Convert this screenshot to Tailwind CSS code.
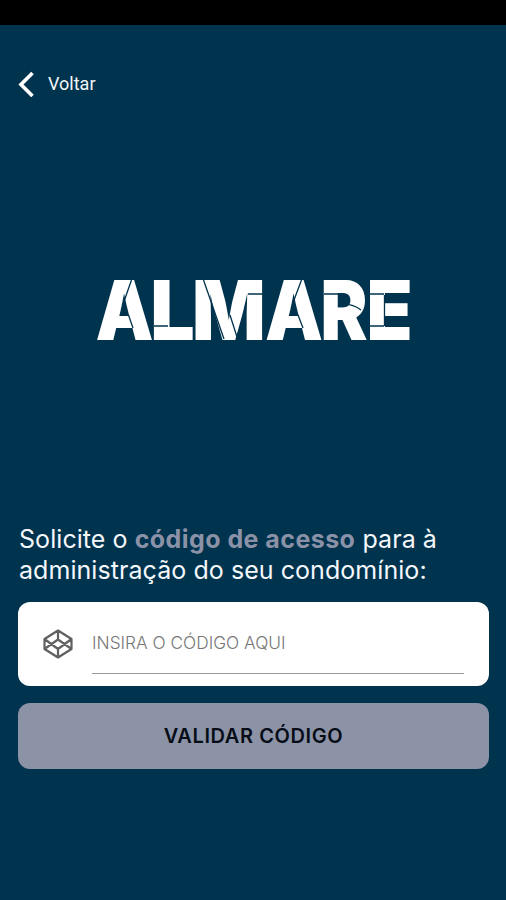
<!DOCTYPE html>
<html lang="pt-BR">
<head>
    <meta charset="UTF-8">
    <meta name="viewport" content="width=device-width, initial-scale=1.0">
    <title>Almare - Código de acesso</title>
    <script src="https://cdn.jsdelivr.net/npm/@tailwindcss/browser@4"></script>
</head>
<body class="bg-[#00334e] h-screen overflow-hidden flex flex-col font-['Inter',sans-serif]">
    <!-- Status bar -->
    <div class="h-[25px] shrink-0 bg-black"></div>

    <header class="px-[18px] pt-[45px]">
        <a href="#" class="flex items-center h-[27px] text-[#f3f6f8] font-['Roboto',sans-serif] text-[18px]">
            <svg class="w-[17px] h-[26px]" viewBox="0 0 17 26" fill="none" stroke="#fff" stroke-width="3.6">
                <path d="M14.5 2 3 13.5 14.5 25"/>
            </svg>
            <span class="ml-[13px]">Voltar</span>
        </a>
    </header>

    <main class="flex flex-col px-[18px]">
        <!-- Stencil wordmark -->
        <svg class="mt-[153px] w-[320px] h-[120px] self-center" viewBox="93 250 320 120" role="img" aria-label="ALMARE">
            <g fill="#fff" font-family="Inter" font-weight="900" font-size="82">
                <text transform="translate(95.5 339.5) scale(.89 1)">A</text>
                <text transform="translate(150.3 339.5) scale(.96 1)">L</text>
                <text transform="translate(192 339.5) scale(.94 1)">M</text>
                <text transform="translate(265 339.5) scale(.89 1)">A</text>
                <text transform="translate(320.6 339.5) scale(.86 1)">R</text>
                <text transform="translate(366.6 339.5) scale(.92 1)">E</text>
            </g>
            <g fill="none" stroke="#00334e" stroke-width="1.3">
                <path d="M131.5 280 124.5 300M128.5 315 133 328M154 326H168"/>
                <path d="M203.5 280 224 339M230 315 237 337M248 294H264"/>
                <path d="M301.5 280 294 300M298 315 303 328"/>
                <path d="M324 294H338M338 304Q352 303 361 310M370 294H384M370 326H384M384.5 295V326"/>
            </g>
        </svg>

        <p class="mt-[154px] pl-px text-[25px] leading-[31px] tracking-[0.06px] text-[#f4f7fb]">
            Solicite o <span class="font-bold tracking-[0.44px] text-[#8b92a8]">código de acesso</span> para à<br>
            administração do seu condomínio:
        </p>

        <form id="code-form" class="mt-4">
            <div class="flex h-[84px] w-[471px] rounded-xl bg-white pl-6 pr-[25px]">
                <svg class="mt-[26px] w-8 h-8 shrink-0" viewBox="0 0 32 32" fill="none" stroke="#606060" stroke-width="2.2" stroke-linejoin="round">
                    <path d="M16 2.5 29.5 11V21L16 29.5 2.5 21V11ZM2.5 11 16 21 29.5 11M2.5 21 16 11.5 29.5 21M16 2.5V11.5M16 21V29.5"/>
                </svg>
                <input type="text" id="code" name="code" placeholder="INSIRA O CÓDIGO AQUI"
                       class="ml-[18px] h-[72px] min-w-0 flex-1 border-b border-[#999] pt-2.5 pb-0 text-[17.3px] font-light text-[#555] placeholder:text-[#777] focus:outline-none">
            </div>
            <button type="submit"
                    class="mt-[17px] h-[66px] w-[471px] rounded-xl bg-[#8c93a7] text-[20px] font-semibold tracking-[0.6px] text-[#070d17]">
                VALIDAR CÓDIGO
            </button>
        </form>
    </main>
</body>
</html>
